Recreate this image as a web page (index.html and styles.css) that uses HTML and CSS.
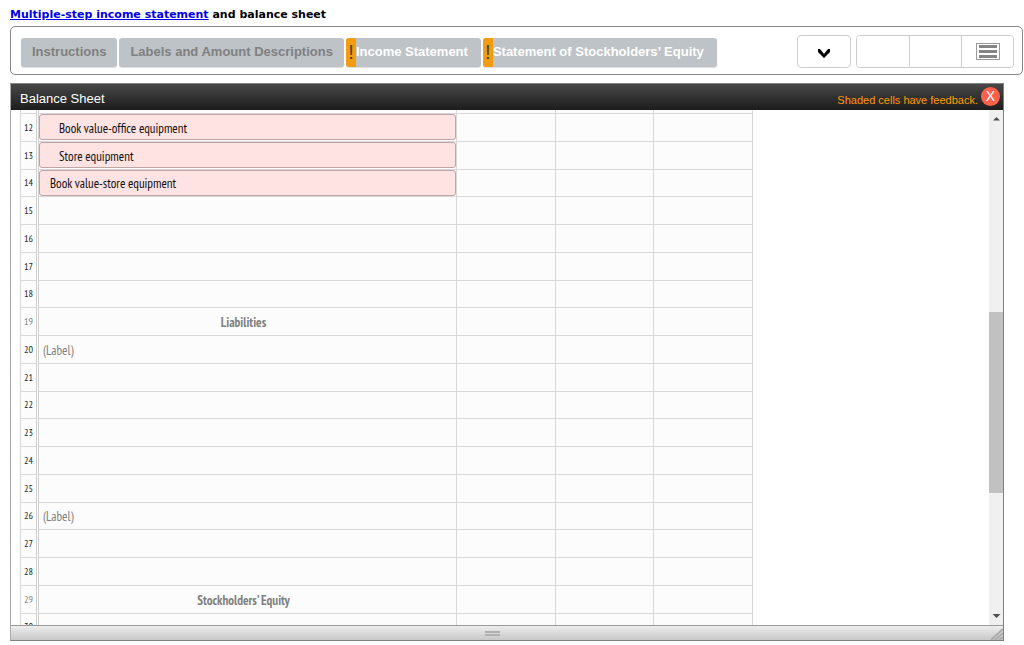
FILE: index.html
```html
<!DOCTYPE html>
<html lang="en">
<head>
<meta charset="utf-8">
<title>Multiple-step income statement and balance sheet</title>
<link rel="stylesheet" href="styles.css">
</head>
<body>
<h1 class="title"><a href="#">Multiple-step income statement</a> and balance sheet</h1>
<header class="toolbar">
  <nav class="tabs">
    <button class="tab" type="button">Instructions</button>
    <button class="tab" type="button">Labels and Amount Descriptions</button>
    <button class="tab tab-flagged" type="button"><span class="flag">!</span><span class="tab-text">Income Statement</span></button>
    <button class="tab tab-flagged" type="button"><span class="flag">!</span><span class="tab-text">Statement of Stockholders’ Equity</span></button>
  </nav>
  <div class="tools">
    <button class="tool tool-single" type="button" aria-label="Expand">
      <svg width="14" height="11" viewBox="0 0 14 11"><path d="M1 1v3l6 6 6-6V1h-2L7 6 3 1z" fill="#000"/></svg>
    </button>
    <div class="tool-group">
      <button class="tool" type="button" aria-label="Previous"></button>
      <button class="tool" type="button" aria-label="Next"></button>
      <button class="tool" type="button" aria-label="List">
        <svg width="24" height="17" viewBox="0 0 24 17"><rect x=".5" y=".5" width="23" height="16" fill="#fff" stroke="#999"/><path d="M3 3.500h18M3 8.500h18M3 13.500h18" stroke="#858585" stroke-width="3"/></svg>
      </button>
    </div>
  </div>
</header>
<main class="panel">
  <div class="panel-head">
    <h2 class="panel-title">Balance Sheet</h2>
    <span class="feedback">Shaded cells have feedback.</span>
    <button class="close" type="button" aria-label="Close">X</button>
  </div>
  <div class="panel-body">
    <div class="sheet-view">
      <table class="sheet">
        <colgroup><col class="col-num"><col class="col-label"><col class="col-amt"><col class="col-amt"><col class="col-amt"></colgroup>
        <tbody>
          <tr class="cut"><th></th><td></td><td></td><td></td><td></td></tr>
          <tr><th>12</th><td><input class="entry shaded indent" aria-label="Row 12" value="Book value-office equipment"></td><td></td><td></td><td></td></tr>
          <tr><th>13</th><td><input class="entry shaded indent" aria-label="Row 13" value="Store equipment"></td><td></td><td></td><td></td></tr>
          <tr><th>14</th><td><input class="entry shaded" aria-label="Row 14" value="Book value-store equipment"></td><td></td><td></td><td></td></tr>
          <tr><th>15</th><td></td><td></td><td></td><td></td></tr>
          <tr><th>16</th><td></td><td></td><td></td><td></td></tr>
          <tr><th>17</th><td></td><td></td><td></td><td></td></tr>
          <tr><th>18</th><td></td><td></td><td></td><td></td></tr>
          <tr class="locked"><th>19</th><td>Liabilities</td><td></td><td></td><td></td></tr>
          <tr><th>20</th><td><input class="entry hint" aria-label="Row 20" value="(Label)"></td><td></td><td></td><td></td></tr>
          <tr><th>21</th><td></td><td></td><td></td><td></td></tr>
          <tr><th>22</th><td></td><td></td><td></td><td></td></tr>
          <tr><th>23</th><td></td><td></td><td></td><td></td></tr>
          <tr><th>24</th><td></td><td></td><td></td><td></td></tr>
          <tr><th>25</th><td></td><td></td><td></td><td></td></tr>
          <tr><th>26</th><td><input class="entry hint" aria-label="Row 26" value="(Label)"></td><td></td><td></td><td></td></tr>
          <tr><th>27</th><td></td><td></td><td></td><td></td></tr>
          <tr><th>28</th><td></td><td></td><td></td><td></td></tr>
          <tr class="locked"><th>29</th><td>Stockholders’ Equity</td><td></td><td></td><td></td></tr>
          <tr><th>30</th><td></td><td></td><td></td><td></td></tr>
        </tbody>
      </table>
    </div>
    <div class="scroll">
      <svg class="arrow" width="9" height="5" viewBox="0 0 9 5"><path d="M1 4.500L4.500 1 8 4.500z" fill="#505050"/></svg>
      <div class="track"><div class="thumb"></div></div>
      <svg class="arrow" width="9" height="5" viewBox="0 0 9 5"><path d="M.5 0L4.500 4 8.500 0z" fill="#505050"/></svg>
    </div>
  </div>
  <div class="panel-foot">
    <span></span>
    <span class="grip"></span>
    <svg class="resize" width="13" height="12" viewBox="0 0 13 12"><path d="M1 12L13 1M5 12l8-7M9 12l4-3" stroke="#aaa" stroke-width="2"/></svg>
  </div>
</main>
</body>
</html>
```
FILE: styles.css
```css
* { box-sizing: border-box; }
body {
  margin: 0;
  height: 100vh;
  padding: 7px 1px 4px 10px;
  display: flex;
  flex-direction: column;
  background: #fff;
  color: #000;
  font-family: "Liberation Sans", Arial, sans-serif;
  overflow: hidden;
}
button { font-family: inherit; border: 0; padding: 0; cursor: pointer; }
.title {
  margin: 0 0 3px;
  font: bold 11px/16px "DejaVu Sans", Verdana, sans-serif;
}
.title a { color: #0000e6; }

.toolbar {
  display: flex;
  align-items: center;
  justify-content: space-between;
  height: 49px;
  flex: none;
  padding: 2px 8px 0 10px;
  border: 1px solid #858585;
  border-radius: 5px;
}
.tabs { display: flex; gap: 2px; padding-top: 1px; }
.tab {
  display: flex;
  align-items: center;
  height: 29px;
  padding: 0 11px 2px;
  background: #bdc3c7;
  border-radius: 3px;
  box-shadow: 0 1px 1px #ddd;
  color: #808080;
  font-size: 13px;
  font-weight: bold;
  white-space: nowrap;
  overflow: hidden;
}
.tab-flagged { padding: 0 13px 0 0; align-items: stretch; color: #fff; }
.tab-text { line-height: 27px; }
.flag {
  width: 10px;
  background: #f39c12;
  color: #444;
  font-size: 20px;
  font-weight: normal;
  line-height: 28px;
  text-align: center;
}
.tools { display: flex; gap: 5px; }
.tool {
  display: flex;
  align-items: center;
  justify-content: center;
  width: 52px;
  height: 31px;
  background: #fff;
}
.tool-single { width: 54px; height: 33px; border: 1px solid #ccc; border-radius: 4px; padding-top: 3px; }
.tool-group { display: flex; border: 1px solid #ccc; border-radius: 4px; overflow: hidden; }
.tool-group .tool + .tool { border-left: 1px solid #ccc; }

.panel {
  display: flex;
  flex-direction: column;
  flex: 1;
  min-height: 0;
  margin: 8px 19px 0 0;
  border: 1px solid #808080;
  border-left-color: #aaa;
}
.panel-head {
  display: flex;
  flex: none;
  height: 26px;
  padding: 0 3px 0 9px;
  background: linear-gradient(#484848, #1c1c1c);
  color: #fff;
}
.panel-title { flex: 1; margin: 0; font-size: 13px; font-weight: normal; line-height: 30px; }
.feedback { color: #f90; font-size: 11px; line-height: 32px; }
.close {
  width: 19px;
  height: 19px;
  margin: 3px 0 0 3px;
  border-radius: 50%;
  background: #ff5f4b;
  color: #fff;
  font-size: 14px;
  line-height: 19px;
}
.panel-body { display: flex; flex: 1; min-height: 0; }
.sheet-view { flex: 1; padding-left: 9px; overflow: hidden; }
.sheet {
  width: 733px;
  table-layout: fixed;
  border-collapse: collapse;
  background: #fcfcfc;
  font-family: "PT Sans Narrow", "Liberation Sans Narrow", "Open Sans Condensed", "DejaVu Sans Condensed", sans-serif;
  font-size: 13px;
}
.col-num { width: 17px; }
.col-label { width: 419px; }
.sheet tr { height: 28px; }
.sheet tr:nth-child(4n) { height: 27px; }
.sheet tr.cut { height: 3px; }
.sheet th, .sheet td { padding: 0; border: 1px solid #d8d8d8; }
.sheet tr.cut th, .sheet tr.cut td { border-top: 0; }
.sheet th { border-right: 3px double #d0d0d0; color: #222; font-size: 10px; font-weight: normal; }
.sheet .locked th { color: #808080; }
.locked td { color: #808080; font-weight: bold; text-align: center; }
.sheet .locked td:nth-child(2) { padding: 2px 8px 0 0; }
.entry {
  display: block;
  width: 100%;
  height: 26px;
  padding: 2px 4px 0;
  border: 0;
  background: transparent;
  font: inherit;
}
.hint { color: #808080; }
.shaded { padding-left: 10px; border: 1px solid #c0a5a5; border-radius: 3px; background: #ffe2e2; color: #111; }
.indent { padding-left: 19px; }

.scroll {
  display: flex;
  flex-direction: column;
  align-items: center;
  width: 14px;
  padding: 6px 0;
  background: #f0f0f0;
}
.arrow { flex: none; }
.track { flex: 1; width: 100%; display: flex; flex-direction: column; }
.track::before { content: ""; flex: 191; }
.thumb { flex: 181; background: #c1c1c1; }
.track::after { content: ""; flex: 121; }

.panel-foot {
  display: grid;
  grid-template-columns: 474fr 15px 503fr;
  align-items: center;
  flex: none;
  height: 15px;
  border-top: 1px solid #999;
  background: linear-gradient(#ededed, #c8c8c8);
}
.grip { height: 5px; border: solid #b0b0b0; border-width: 2px 0; }
.resize { justify-self: end; align-self: end; }
```
